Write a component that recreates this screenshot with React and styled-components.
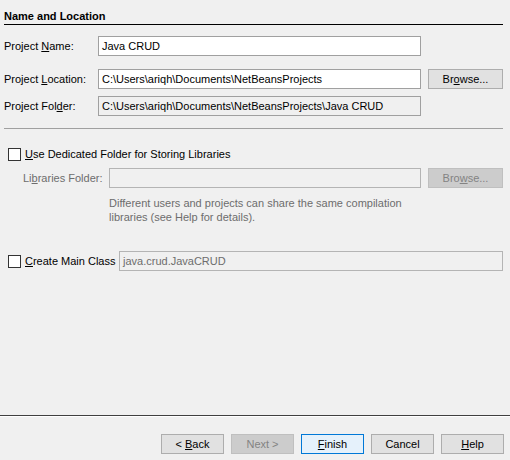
import styled, { createGlobalStyle } from "styled-components"

const GlobalStyle = createGlobalStyle`
  html, body {
    margin: 0;
    padding: 0;
    background: #f0f0f0;
  }
  * { box-sizing: border-box; }
`

const Window = styled.div`
  width: 510px;
  height: 460px;
  display: flex;
  flex-direction: column;
  background: #f0f0f0;
  font-family: "Liberation Sans", Arial, sans-serif;
  font-size: 11px;
  color: #000;
  overflow: hidden;
`

const Content = styled.div`
  flex: 1;
  padding: 0 7px 0 4px;
  display: flex;
  flex-direction: column;
`

const Heading = styled.div`
  margin-top: 9px;
  height: 16px;
  line-height: 14px;
  font-weight: bold;
  border-bottom: 1px solid #000;
`

const Row = styled.div`
  display: flex;
  align-items: center;
  height: 20px;
  margin-top: ${p => p.$top}px;
  padding-left: ${p => p.$indent || 0}px;
`

const Label = styled.label`
  width: ${p => p.$width}px;
  flex-shrink: 0;
  color: ${p => (p.$disabled ? "#6d6d6d" : "#000")};
  white-space: nowrap;
`

const Field = styled.div`
  width: ${p => (p.$width ? `${p.$width}px` : "auto")};
  flex: ${p => (p.$width ? "none" : 1)};
  height: 20px;
  line-height: 18px;
  padding: 0 3px;
  border: 1px solid ${p => (p.$disabled ? "#b4b4b4" : "#a0a0a0")};
  background: ${p => (p.$disabled || p.$readOnly ? "#f0f0f0" : "#fff")};
  color: ${p => (p.$disabled ? "#6d6d6d" : "#000")};
  white-space: nowrap;
  overflow: hidden;
`

const Button = styled.div`
  width: ${p => p.$width || 63}px;
  height: 20px;
  flex-shrink: 0;
  display: flex;
  align-items: center;
  justify-content: center;
  white-space: pre;
  margin-left: ${p => p.$gap || 0}px;
  border: 1px solid ${p => (p.$default ? "#0078d7" : p.$disabled ? "#bfbfbf" : "#adadad")};
  background: ${p => (p.$default ? "#e5f1fb" : p.$disabled ? "#cccccc" : "#e1e1e1")};
  color: ${p => (p.$disabled ? "#838383" : "#000")};
`

const Separator = styled.div`
  height: 1px;
  background: #a0a0a0;
  margin-top: ${p => p.$top}px;
`

const CheckRow = styled.div`
  display: flex;
  align-items: center;
  height: 20px;
  margin-top: ${p => p.$top}px;
  padding-left: 4px;
`

const Box = styled.span`
  width: 13px;
  height: 13px;
  flex-shrink: 0;
  border: 1px solid #333;
  background: #fff;
  margin-right: 4px;
`

const CheckText = styled.span`
  white-space: nowrap;
  width: ${p => (p.$width ? `${p.$width}px` : "auto")};
  flex-shrink: 0;
`

const Note = styled.div`
  margin-top: 8px;
  padding-left: 105px;
  line-height: 14px;
  color: #6d6d6d;
`

const Footer = styled.div`
  display: flex;
  flex-direction: column;
`

const FooterLine = styled.div`
  height: 2px;
  border-top: 1px solid #404040;
  border-bottom: 1px solid #ffffff;
`

const ButtonBar = styled.div`
  display: flex;
  justify-content: flex-end;
  padding: 17px 6px 6px 0;
  gap: 7px;
`

const U = styled.span`
  text-decoration: underline;
  text-underline-offset: 1px;
`

export default function App() {
  return (
    <>
      <GlobalStyle />
      <Window>
        <Content>
          <Heading>Name and Location</Heading>

          <Row $top={11}>
            <Label $width={94}>Project <U>N</U>ame:</Label>
            <Field $width={323}>Java CRUD</Field>
          </Row>
          <Row $top={13}>
            <Label $width={94}>Project <U>L</U>ocation:</Label>
            <Field $width={323}>C:\Users\ariqh\Documents\NetBeansProjects</Field>
            <Button $width={75} $gap={7}>Br<U>o</U>wse...</Button>
          </Row>
          <Row $top={7}>
            <Label $width={94}>Project Fol<U>d</U>er:</Label>
            <Field $width={323} $readOnly>C:\Users\ariqh\Documents\NetBeansProjects\Java CRUD</Field>
          </Row>

          <Separator $top={12} />

          <CheckRow $top={15}>
            <Box />
            <CheckText><U>U</U>se Dedicated Folder for Storing Libraries</CheckText>
          </CheckRow>
          <Row $top={4} $indent={19}>
            <Label $width={86} $disabled>Li<U>b</U>raries Folder:</Label>
            <Field $width={312} $disabled />
            <Button $width={75} $gap={7} $disabled>Bro<U>w</U>se...</Button>
          </Row>
          <Note>
            Different users and projects can share the same compilation
            <br />
            libraries (see Help for details).
          </Note>

          <CheckRow $top={27}>
            <Box />
            <CheckText $width={94}><U>C</U>reate Main Class</CheckText>
            <Field $disabled>java.crud.JavaCRUD</Field>
          </CheckRow>
        </Content>

        <Footer>
          <FooterLine />
          <ButtonBar>
            <Button>{"< "}<U>B</U>ack</Button>
            <Button $disabled>{"Next >"}</Button>
            <Button $default><U>F</U>inish</Button>
            <Button>Cancel</Button>
            <Button><U>H</U>elp</Button>
          </ButtonBar>
        </Footer>
      </Window>
    </>
  )
}
